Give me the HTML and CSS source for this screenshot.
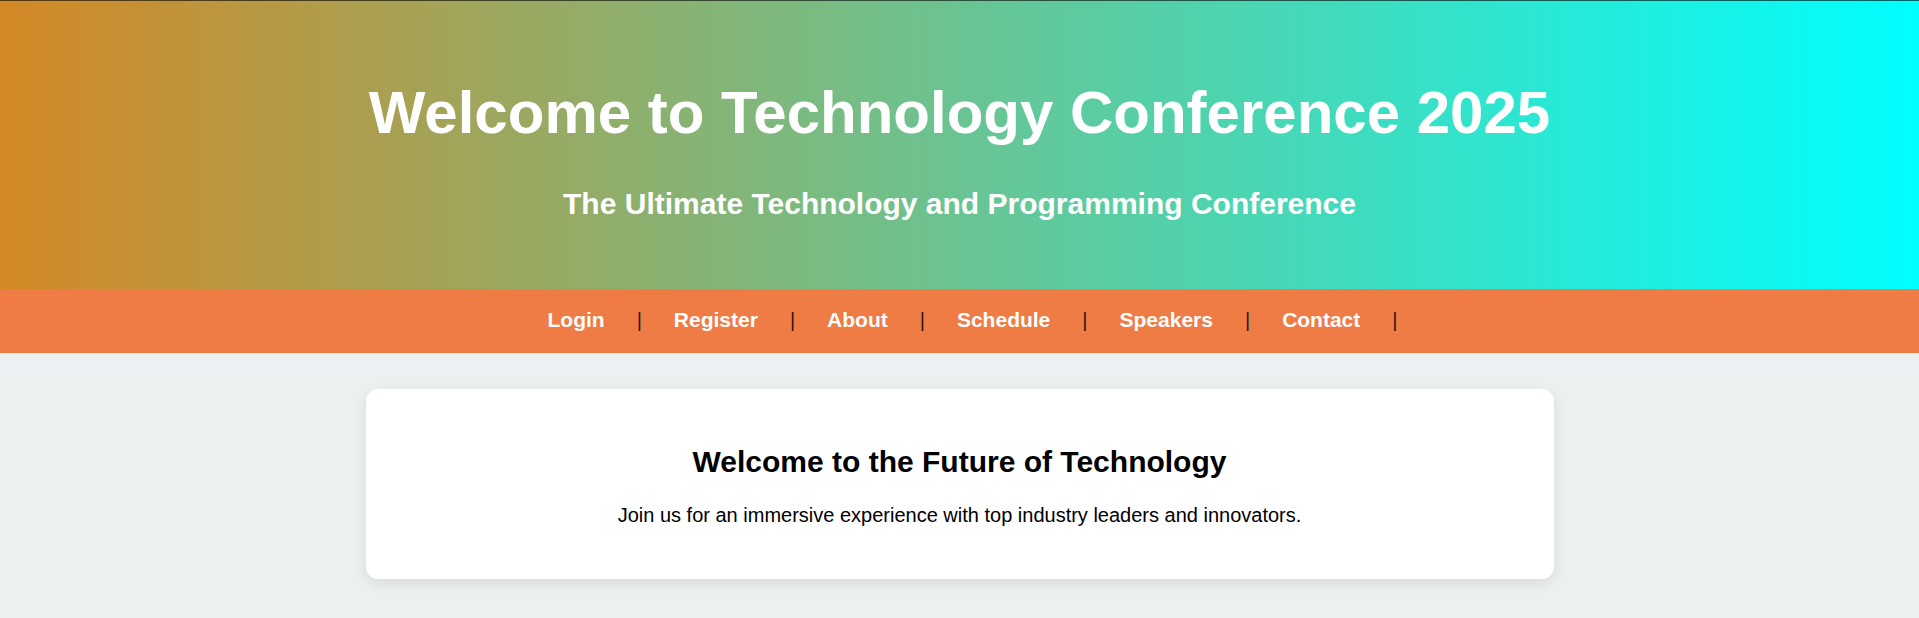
FILE: index.html
```html
<!DOCTYPE html>
<html lang="en">
<head>
<meta charset="utf-8">
<title>Technology Conference 2025</title>
<link rel="stylesheet" href="styles.css">
</head>
<body>
<header class="hero">
  <h1 class="hero-title">Welcome to Technology Conference 2025</h1>
  <h2 class="hero-subtitle">The Ultimate Technology and Programming Conference</h2>
</header>
<nav class="nav">
  <ul class="nav-list">
    <li class="nav-item"><a class="nav-link" href="#">Login</a><span class="nav-sep">|</span></li>
    <li class="nav-item"><a class="nav-link" href="#">Register</a><span class="nav-sep">|</span></li>
    <li class="nav-item"><a class="nav-link" href="#">About</a><span class="nav-sep">|</span></li>
    <li class="nav-item"><a class="nav-link" href="#">Schedule</a><span class="nav-sep">|</span></li>
    <li class="nav-item"><a class="nav-link" href="#">Speakers</a><span class="nav-sep">|</span></li>
    <li class="nav-item"><a class="nav-link" href="#">Contact</a><span class="nav-sep">|</span></li>
  </ul>
</nav>
<main class="main">
  <section class="card">
    <h2 class="card-title">Welcome to the Future of Technology</h2>
    <p class="card-text">Join us for an immersive experience with top industry leaders and innovators.</p>
  </section>
</main>
</body>
</html>
```

FILE: styles.css
```css
* { box-sizing: border-box; }

html, body {
  margin: 0;
  padding: 0;
}

body {
  font-family: "Liberation Sans", Arial, sans-serif;
  background: #ecf0f1;
  color: #000;
}

.hero {
  border-top: 1px solid rgba(0, 0, 0, 0.6);
  background: linear-gradient(to right, #d48825, #00ffff);
  color: #fff;
  text-align: center;
  padding: 77px 20px 0;
  height: 289px;
}

.hero-title {
  margin: 0;
  font-size: 60px;
  line-height: 69px;
  font-weight: bold;
}

.hero-subtitle {
  margin: 40px 0 0;
  font-size: 30px;
  line-height: 34px;
  font-weight: bold;
}

.nav {
  background: #ef7b45;
  height: 64px;
  padding: 18px 0 0;
}

.nav-list {
  list-style: none;
  margin: 0;
  padding: 0 0 0 26px;
  display: flex;
  justify-content: center;
  gap: 32px;
}

.nav-item {
  display: flex;
  align-items: baseline;
  gap: 32px;
  line-height: 25px;
}

.nav-link {
  color: #fff;
  text-decoration: none;
  font-weight: bold;
  font-size: 21px;
}

.nav-sep {
  color: #2a1a10;
  font-size: 20px;
}

.main {
  display: flex;
  justify-content: center;
  padding: 36px 20px 40px;
}

.card {
  width: 1188px;
  background: #fff;
  border-radius: 12px;
  box-shadow: 0 4px 14px rgba(0, 0, 0, 0.09);
  text-align: center;
  padding: 56px 40px 52px;
}

.card-title {
  margin: 0;
  font-size: 30px;
  line-height: 34px;
  font-weight: bold;
}

.card-text {
  margin: 25px 0 0;
  font-size: 20px;
  line-height: 23px;
}
```
